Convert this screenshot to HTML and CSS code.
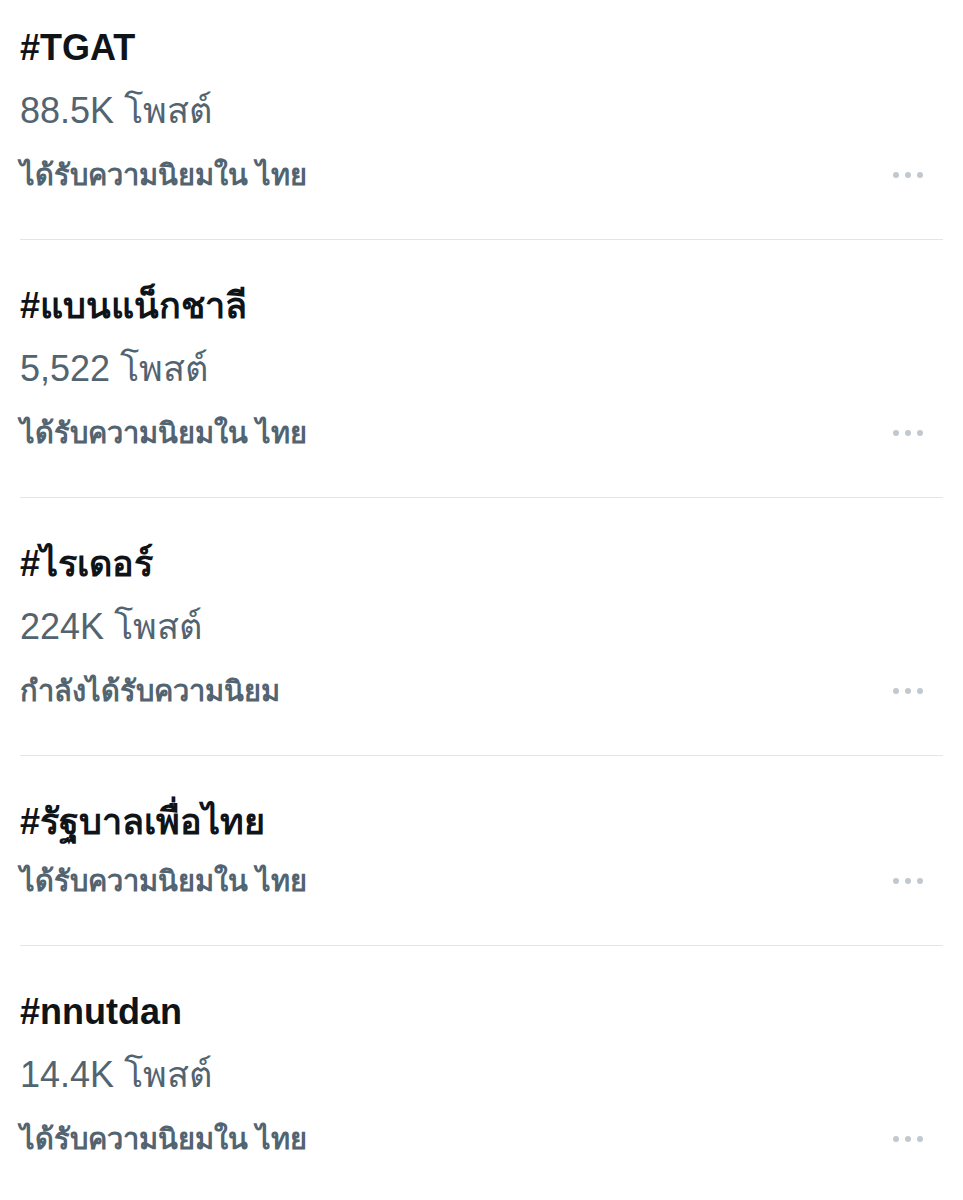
FILE: index.html
```html
<!DOCTYPE html>
<html lang="th">
<head>
	<meta charset="utf-8">
	<title>Trends</title>
	<link rel="stylesheet" href="styles.css">
</head>
<body>
<div class="trends">
	<div class="trend">
		<div class="trend-text">
			<div class="trend-title">#TGAT</div>
			<div class="trend-count">88.5K โพสต์</div>
			<div class="trend-meta">ได้รับความนิยมใน ไทย</div>
		</div>
		<div class="trend-more"><span></span><span></span><span></span></div>
	</div>
	<div class="trend">
		<div class="trend-text">
			<div class="trend-title">#แบนแน็กชาลี</div>
			<div class="trend-count">5,522 โพสต์</div>
			<div class="trend-meta">ได้รับความนิยมใน ไทย</div>
		</div>
		<div class="trend-more"><span></span><span></span><span></span></div>
	</div>
	<div class="trend">
		<div class="trend-text">
			<div class="trend-title">#ไรเดอร์</div>
			<div class="trend-count">224K โพสต์</div>
			<div class="trend-meta">กำลังได้รับความนิยม</div>
		</div>
		<div class="trend-more"><span></span><span></span><span></span></div>
	</div>
	<div class="trend trend-short">
		<div class="trend-text">
			<div class="trend-title">#รัฐบาลเพื่อไทย</div>
			<div class="trend-meta">ได้รับความนิยมใน ไทย</div>
		</div>
		<div class="trend-more"><span></span><span></span><span></span></div>
	</div>
	<div class="trend">
		<div class="trend-text">
			<div class="trend-title">#nnutdan</div>
			<div class="trend-count">14.4K โพสต์</div>
			<div class="trend-meta">ได้รับความนิยมใน ไทย</div>
		</div>
		<div class="trend-more"><span></span><span></span><span></span></div>
	</div>
</div>
</body>
</html>
```

FILE: styles.css
```css
body {
	margin: 0;
	background: #fff;
	font-family: "Liberation Sans", "Noto Sans", sans-serif;
}

.trends {
	margin: -18px 20px 0 20px;
}

.trend {
	display: flex;
	justify-content: space-between;
	align-items: flex-end;
	padding: 35px 0 32px 0;
	border-bottom: 1px solid #e3e6e9;
}

.trend-title {
	color: #0f1419;
	font-size: 36px;
	font-weight: bold;
	line-height: 62px;
}

.trend-count {
	color: #536471;
	font-size: 36px;
	line-height: 64px;
}

.trend-meta {
	color: #536471;
	font-size: 29px;
	font-weight: bold;
	line-height: 64px;
}

.trend-short .trend-title {
	margin-bottom: -4px;
}

.trend-more {
	display: flex;
	gap: 6px;
	height: 64px;
	align-items: center;
	padding-right: 20px;
}

.trend-more span {
	width: 6px;
	height: 6px;
	border-radius: 50%;
	background: #c1c8cf;
}
```
